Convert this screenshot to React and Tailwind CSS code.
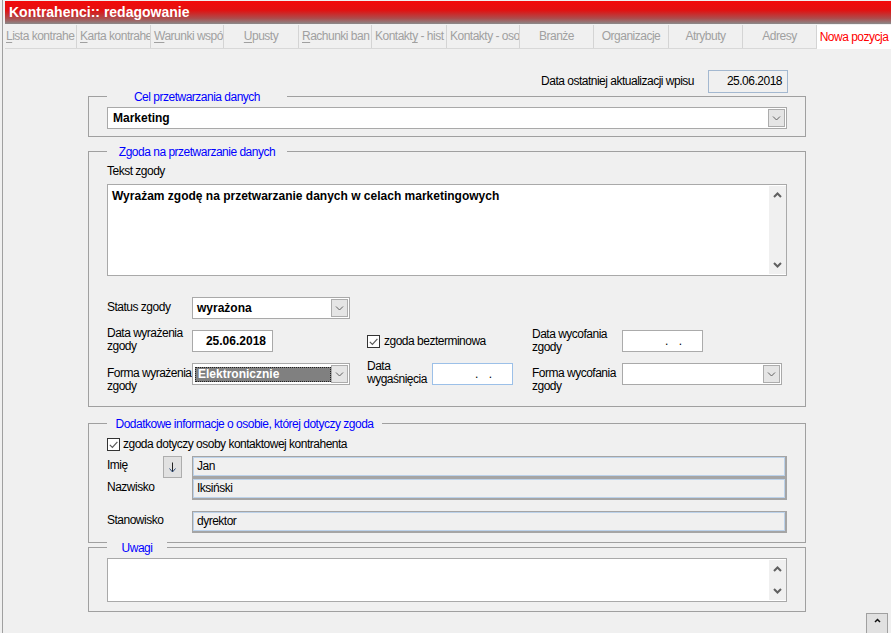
import React from "react";

function DropBtn() {
  return (
    <div className="w-[17px] h-[18px] mr-[1px] shrink-0 bg-[#e5e5e5] border border-[#acacac] flex items-center justify-center">
      <svg width="9" height="6" viewBox="0 0 9 6">
        <path d="M1 1.5 L4.5 5 L8 1.5" fill="none" stroke="#606060" strokeWidth="1" />
      </svg>
    </div>
  );
}

function Select({ className = "", children }) {
  return (
    <div className={`h-[22px] bg-white border border-[#a9a9a9] flex items-center ${className}`}>
      <div className="flex-1 min-w-0 h-full flex items-center">{children}</div>
      <DropBtn />
    </div>
  );
}

function Up() {
  return (
    <svg width="9" height="6" viewBox="0 0 9 6">
      <path d="M1 5 L4.5 1.5 L8 5" fill="none" stroke="#606060" strokeWidth="2" />
    </svg>
  );
}

function Down() {
  return (
    <svg width="9" height="6" viewBox="0 0 9 6">
      <path d="M1 1 L4.5 4.5 L8 1" fill="none" stroke="#606060" strokeWidth="2" />
    </svg>
  );
}

function ScrollStrip() {
  return (
    <div className="w-[17px] shrink-0 my-[1px] bg-[#f0f0f0] flex flex-col items-center justify-between py-[6px]">
      <Up />
      <Down />
    </div>
  );
}

function Checkbox() {
  return (
    <div className="w-[13px] h-[13px] shrink-0 border border-[#333333] bg-white flex items-center justify-center">
      <svg width="9" height="8" viewBox="0 0 9 8">
        <path d="M0.8 3.8 L3.4 6.4 L8.4 0.8" fill="none" stroke="#5a5a5a" strokeWidth="1.2" />
      </svg>
    </div>
  );
}

function DateEmpty({ className = "" }) {
  return (
    <div className={`h-[22px] bg-white border flex items-center pl-[42px] gap-[11px] ${className}`}>
      <span>.</span>
      <span>.</span>
    </div>
  );
}

function Field({ children }) {
  return (
    <div className="flex-1 h-[22px] bg-[#f0f0f0] border border-[#a5a5a5] border-r-2 border-b-2 shadow-[inset_0_0_0_1px_#bcd2ea] flex items-center pl-[4px]">
      {children}
    </div>
  );
}

function Group({ legend, legendClass, className = "", children }) {
  return (
    <div className={`relative border border-[#a0a0a0] px-[18px] ${className}`}>
      <div
        className={`absolute -top-[7px] left-[18px] h-[14px] leading-[14px] bg-[#f0f0f0] text-center text-[#0000ff] whitespace-nowrap ${legendClass}`}
      >
        {legend}
      </div>
      {children}
    </div>
  );
}

const tabs = [
  { pre: "", u: "L", post: "ista kontrahe", w: "w-[72px] pl-[1px]" },
  { pre: "", u: "K", post: "arta kontrahe", w: "w-[74px] pl-[3px]" },
  { pre: "", u: "W", post: "arunki wspó", w: "w-[73px] pl-[3px]" },
  { pre: "", u: "U", post: "pusty", w: "w-[75px] justify-center" },
  { pre: "", u: "R", post: "achunki ban", w: "w-[73px] pl-[3px]" },
  { pre: "Kontakt", u: "y", post: " - hist", w: "w-[75px] pl-[3px]" },
  { pre: "Kontakty - oso", u: "", post: "", w: "w-[73px] pl-[3px]" },
  { pre: "Branże", u: "", post: "", w: "w-[74px] justify-center" },
  { pre: "Organizacje", u: "", post: "", w: "w-[75px] justify-center" },
  { pre: "Atrybuty", u: "", post: "", w: "w-[74px] justify-center" },
  { pre: "Adresy", u: "", post: "", w: "w-[74px] justify-center" },
];

export default function App() {
  return (
    <div className="w-[891px] h-[633px] overflow-hidden bg-[#f0f0f0] flex font-['Liberation_Sans',Arial,sans-serif] text-[12px] leading-[13px] tracking-[-0.5px] text-black">
      <div className="w-[5px] shrink-0 flex pl-[2px]">
        <div className="w-px h-full bg-[#a0a0a0]" />
      </div>
      <div className="flex-1 min-w-0 flex flex-col">
        <div className="mt-[1px] h-[23px] shrink-0 bg-[linear-gradient(to_bottom,#f30a0a_0%,#e21111_40%,#ad4c4c_75%,#8a8a8a_100%)] flex items-center pl-[4px] text-white font-bold text-[14px] tracking-normal">
          Kontrahenci:: redagowanie
        </div>
        <div className="mt-[1px] h-[24px] shrink-0 flex border-b border-[#d8d8d8]">
          {tabs.map((t, i) => (
            <div
              key={i}
              className={`h-full shrink-0 flex items-center overflow-hidden whitespace-nowrap border-r border-[#d4d4d4] text-[#a0a0a0] ${t.w}`}
            >
              <span>
                {t.pre}
                {t.u && <span className="underline underline-offset-2">{t.u}</span>}
                {t.post}
              </span>
            </div>
          ))}
          <div className="flex-1 h-[24px] -mb-px bg-white flex items-center justify-center text-[#ff0000] whitespace-nowrap">
            Nowa pozycja
          </div>
        </div>

        <div className="ml-[83px] w-[718px] flex flex-col">
          <div className="mt-[21px] h-[23px] flex justify-end items-center pr-[18px]">
            <span className="mr-[14px]">Data ostatniej aktualizacji wpisu</span>
            <div className="w-[80px] h-[23px] bg-[#f0f0f0] border border-[#a3b8d0] flex items-center justify-end pr-[5px]">
              25.06.2018
            </div>
          </div>

          <Group legend="Cel przetwarzania danych" legendClass="w-[180px]" className="mt-[3px] pt-[10px] pb-[7px]">
            <Select className="w-full">
              <span className="pl-[5px] font-bold tracking-normal">Marketing</span>
            </Select>
          </Group>

          <Group legend="Zgoda na przetwarzanie danych" legendClass="w-[180px]" className="mt-[14px] pt-[13px] pb-[21px]">
            <div className="h-[13px]">Tekst zgody</div>
            <div className="mt-[6px] h-[92px] bg-white border border-[#a9a9a9] flex">
              <div className="flex-1 pl-[4px] pt-[4px] font-bold tracking-normal leading-[14px]">
                Wyrażam zgodę na przetwarzanie danych w celach marketingowych
              </div>
              <ScrollStrip />
            </div>

            <div className="mt-[21px] h-[22px] flex items-start">
              <div className="w-[85px] shrink-0 mt-[4px]">Status zgody</div>
              <Select className="w-[158px]">
                <span className="pl-[4px] font-bold tracking-normal">wyrażona</span>
              </Select>
            </div>

            <div className="mt-[11px] h-[22px] flex items-start">
              <div className="w-[85px] shrink-0 -mt-[3px]">
                Data wyrażenia
                <br />
                zgody
              </div>
              <div className="w-[81px] h-[22px] shrink-0 bg-white border border-[#a9a9a9] flex items-center justify-end pr-[6px] font-bold tracking-normal">
                25.06.2018
              </div>
              <div className="w-[94px] shrink-0" />
              <div className="w-[165px] shrink-0 flex items-center mt-[5px]">
                <Checkbox />
                <span className="ml-[4px]">zgoda bezterminowa</span>
              </div>
              <div className="w-[90px] shrink-0 -mt-[2px]">
                Data wycofania
                <br />
                zgody
              </div>
              <DateEmpty className="w-[81px] border-[#ababab]" />
            </div>

            <div className="mt-[11px] h-[22px] flex items-start">
              <div className="w-[85px] shrink-0 mt-[4px]">
                Forma wyrażenia
                <br />
                zgody
              </div>
              <Select className="w-[158px] shrink-0">
                <div className="ml-[2px] flex-1 h-[15px] bg-[#808080] border border-dotted border-[#222222] flex items-center pl-[2px] text-white font-bold tracking-normal">
                  Elektronicznie
                </div>
              </Select>
              <div className="w-[17px] shrink-0" />
              <div className="w-[65px] shrink-0 -mt-[3px]">
                Data
                <br />
                wygaśnięcia
              </div>
              <DateEmpty className="w-[81px] shrink-0 border-[#9cc0e8]" />
              <div className="w-[19px] shrink-0" />
              <div className="w-[90px] shrink-0 mt-[4px]">
                Forma wycofania
                <br />
                zgody
              </div>
              <Select className="w-[160px] shrink-0" />
            </div>
          </Group>

          <Group
            legend="Dodatkowe informacje o osobie, której dotyczy zgoda"
            legendClass="w-[275px]"
            className="mt-[16px] pt-[14px] pb-[9px]"
          >
            <div className="h-[13px] flex items-center">
              <Checkbox />
              <span className="ml-[3px]">zgoda dotyczy osoby kontaktowej kontrahenta</span>
            </div>
            <div className="mt-[5px] h-[22px] flex items-start">
              <div className="w-[56px] shrink-0 mt-[3px]">Imię</div>
              <div className="w-[19px] h-[22px] shrink-0 bg-[#e1e1e1] border border-[#adadad] flex items-center justify-center">
                <svg width="7" height="11" viewBox="0 0 7 11">
                  <path d="M3.5 0.5 L3.5 10" fill="none" stroke="#222222" strokeWidth="1" />
                  <path d="M0.5 6.5 L3.5 10 L6.5 6.5" fill="none" stroke="#2c4a78" strokeWidth="1" />
                </svg>
              </div>
              <div className="ml-[10px] flex-1 flex">
                <Field>Jan</Field>
              </div>
            </div>
            <div className="h-[22px] flex items-start">
              <div className="w-[85px] shrink-0 mt-[3px]">Nazwisko</div>
              <Field>Iksiński</Field>
            </div>
            <div className="mt-[11px] h-[22px] flex items-start">
              <div className="w-[85px] shrink-0 mt-[3px]">Stanowisko</div>
              <Field>dyrektor</Field>
            </div>
          </Group>

          <Group legend="Uwagi" legendClass="w-[60px]" className="mt-[4px] pt-[10px] pb-[9px]">
            <div className="h-[44px] bg-white border border-[#a9a9a9] flex">
              <div className="flex-1" />
              <ScrollStrip />
            </div>
          </Group>
        </div>

        <div className="flex justify-end pr-[3px] mt-[1px]">
          <div className="w-[22px] h-[21px] bg-[#e1e1e1] border border-[#a0a0a0] flex justify-center pt-[4px]">
            <svg width="7" height="5" viewBox="0 0 7 5">
              <path d="M1 4 L3.5 1.5 L6 4" fill="none" stroke="#111111" strokeWidth="1.5" />
            </svg>
          </div>
        </div>
      </div>
    </div>
  );
}
